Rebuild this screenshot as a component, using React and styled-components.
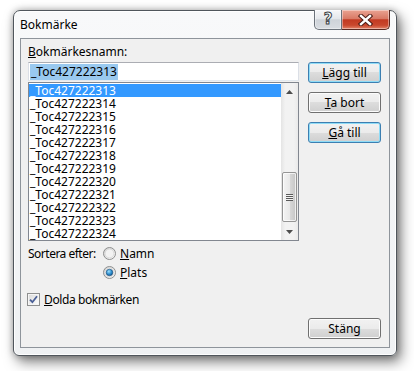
import React from 'react'
import styled, { createGlobalStyle, css } from 'styled-components'

const GlobalStyle = createGlobalStyle`
  html, body {
    margin: 0;
    padding: 0;
    background: #ffffff;
  }
  body {
    font-family: "Noto Sans", "Open Sans", sans-serif;
    font-size: 12px;
    color: #000;
  }
`

const bookmarks = [
  '313', '314', '315', '316', '317', '318',
  '319', '320', '321', '322', '323', '324',
].map(n => `_Toc427222${n}`)

const Radio = ({ checked }) => (
  <svg width="13" height="13" viewBox="0 0 13 13">
    <defs>
      <linearGradient id="radioRing" x1="0" y1="0" x2="1" y2="1">
        <stop offset="0" stopColor="#cfcfcf" />
        <stop offset="1" stopColor="#fcfcfc" />
      </linearGradient>
      <radialGradient id="radioDot" cx="0.4" cy="0.35" r="0.75">
        <stop offset="0" stopColor="#9be0ff" />
        <stop offset="0.55" stopColor="#2b8bcb" />
        <stop offset="1" stopColor="#0d4a80" />
      </radialGradient>
    </defs>
    <circle cx="6.5" cy="6.5" r="6" fill="url(#radioRing)" stroke="#8e8f8f" />
    <circle cx="6.5" cy="6.5" r="4.4" fill="#f2f2f2" stroke="#d6d6d6" strokeWidth="0.8" />
    {checked && <circle cx="6.5" cy="6.5" r="3.3" fill="url(#radioDot)" stroke="#1b4d79" strokeWidth="0.6" />}
  </svg>
)

const Checkbox = () => (
  <svg width="13" height="13" viewBox="0 0 13 13">
    <defs>
      <linearGradient id="boxFill" x1="0" y1="0" x2="1" y2="1">
        <stop offset="0" stopColor="#dcdcdc" />
        <stop offset="1" stopColor="#fbfbfb" />
      </linearGradient>
    </defs>
    <rect x="0.5" y="0.5" width="12" height="12" fill="#f5f5f5" stroke="#8e8f8f" />
    <rect x="2" y="2" width="9" height="9" fill="url(#boxFill)" />
    <path d="M3 6.6 L5.4 9.2 L10 3.2" fill="none" stroke="#4a5f96" strokeWidth="1.8" />
  </svg>
)

const Arrow = ({ down }) => (
  <svg width="7" height="4" viewBox="0 0 7 4">
    <polygon points={down ? '0,0 7,0 3.5,4' : '0,4 7,4 3.5,0'} fill="#4d4d4d" />
  </svg>
)

const CloseGlyph = () => (
  <svg width="15" height="12" viewBox="0 0 15 12">
    <path d="M3 2 L12 10 M12 2 L3 10" stroke="#4a1b14" strokeWidth="4.4" strokeLinecap="square" />
    <path d="M3 2 L12 10 M12 2 L3 10" stroke="#ffffff" strokeWidth="2.4" strokeLinecap="square" />
  </svg>
)

const App = () => {
  return (
    <Page>
      <GlobalStyle />
      <Window>
        <TitleBar>
          <Title>Bokmärke</Title>
          <CaptionGroup>
            <CaptionButton>
              <HelpGlyph>?</HelpGlyph>
            </CaptionButton>
            <CaptionButton $close>
              <CloseGlyph />
            </CaptionButton>
          </CaptionGroup>
        </TitleBar>

        <Client>
          <FieldLabel><u>B</u>okmärkesnamn:</FieldLabel>
          <MainRow>
            <LeftColumn>
              <NameInput>
                <Selected>_Toc427222313</Selected>
              </NameInput>
              <ListBox>
                <Rows>
                  {bookmarks.map((b, i) => (
                    <Row key={b} $selected={i === 0}>{b}</Row>
                  ))}
                </Rows>
                <ScrollBar>
                  <ScrollArrow><Arrow /></ScrollArrow>
                  <Track>
                    <Thumb><Grip /></Thumb>
                  </Track>
                  <ScrollArrow><Arrow down /></ScrollArrow>
                </ScrollBar>
              </ListBox>
            </LeftColumn>
            <ButtonColumn>
              <Button $default><u>L</u>ägg till</Button>
              <Button><u>T</u>a bort</Button>
              <Button $default><u>G</u>å till</Button>
            </ButtonColumn>
          </MainRow>

          <SortRow>
            <SortLabel>Sortera efter:</SortLabel>
            <RadioList>
              <OptionRow><Radio /><span><u>N</u>amn</span></OptionRow>
              <OptionRow><Radio checked /><span><u>P</u>lats</span></OptionRow>
            </RadioList>
          </SortRow>

          <CheckRow>
            <Checkbox />
            <CheckText><u>D</u>olda bokmärken</CheckText>
          </CheckRow>

          <Footer>
            <Button>Stäng</Button>
          </Footer>
        </Client>
      </Window>
    </Page>
  )
}

export default App

const Page = styled.div`
  box-sizing: border-box;
  width: 414px;
  height: 371px;
  padding: 10px 0 0 13px;
  overflow: hidden;
`
const Window = styled.div`
  box-sizing: border-box;
  width: 384px;
  height: 346px;
  border: 1px solid #50565c;
  border-radius: 7px 7px 6px 6px;
  background: linear-gradient(#f8f9fa, #eff1f3);
  box-shadow: inset 0 0 0 1px rgba(255, 255, 255, 0.9),
    0 0 7px rgba(0, 0, 0, 0.28),
    4px 6px 13px rgba(0, 0, 0, 0.5);
  display: flex;
  flex-direction: column;
`
const TitleBar = styled.div`
  height: 27px;
  flex: none;
  display: flex;
  align-items: center;
  padding-left: 6px;
`
const Title = styled.div`
  line-height: 16px;
  margin-top: 1px;
`
const CaptionGroup = styled.div`
  margin-left: auto;
  margin-right: 6px;
  margin-top: -1px;
  align-self: flex-start;
  display: flex;
  height: 20px;
`
const CaptionButton = styled.div`
  box-sizing: border-box;
  height: 20px;
  width: ${p => (p.$close ? 48 : 28)}px;
  border: 1px solid ${p => (p.$close ? '#5a2a22' : '#6b727a')};
  border-top: none;
  display: flex;
  align-items: center;
  justify-content: center;
  box-shadow: inset 0 0 0 1px rgba(255, 255, 255, 0.4);
  ${p =>
    p.$close
      ? css`
          border-left: none;
          border-radius: 0 0 5px 0;
          background: linear-gradient(#eaa392 0%, #d97a66 45%, #c23a22 52%, #c9472d 80%, #e3846a 100%);
        `
      : css`
          border-radius: 0 0 0 5px;
          background: linear-gradient(#f6f7f9 0%, #e4e7eb 45%, #ced3d9 52%, #d8dce1 100%);
        `}
`
const HelpGlyph = styled.span`
  font-family: "DejaVu Sans", sans-serif;
  font-size: 15px;
  font-weight: bold;
  line-height: 15px;
  color: #fff;
  -webkit-text-stroke: 1px #3a3f45;
`
const Client = styled.div`
  flex: 1;
  margin: 0 6px 7px 6px;
  border: 1px solid #8e949b;
  background: #f0f0f0;
  padding: 5px 8px 8px 7px;
  display: flex;
  flex-direction: column;
`
const FieldLabel = styled.div`
  line-height: 16px;
  margin-bottom: 2px;
`
const MainRow = styled.div`
  display: flex;
  gap: 9px;
`
const LeftColumn = styled.div`
  width: 271px;
  display: flex;
  flex-direction: column;
  gap: 1px;
`
const NameInput = styled.div`
  box-sizing: border-box;
  height: 19px;
  border: 1px solid #abadb3;
  border-left-color: #dbdfe6;
  border-right-color: #dbdfe6;
  border-bottom-color: #e3e9ef;
  background: #fff;
  padding: 1px 0 0 1px;
  display: flex;
`
const Selected = styled.span`
  background: #99c9ef;
  line-height: 15px;
  padding: 0 1px;
`
const ListBox = styled.div`
  box-sizing: border-box;
  height: 159px;
  border: 1px solid #828790;
  background: #fff;
  display: flex;
`
const Rows = styled.div`
  flex: 1;
  padding-top: 1px;
`
const Row = styled.div`
  height: 13px;
  line-height: 13px;
  padding-left: 1px;
  white-space: nowrap;
  ${p =>
    p.$selected &&
    css`
      background: #3399ff;
      color: #fff;
    `}
`
const ScrollBar = styled.div`
  width: 17px;
  display: flex;
  flex-direction: column;
  background: linear-gradient(to right, #e4e4e4 0%, #f2f2f2 25%, #f2f2f2 75%, #eaeaea 100%);
`
const ScrollArrow = styled.div`
  height: 17px;
  display: flex;
  align-items: center;
  justify-content: center;
`
const Track = styled.div`
  flex: 1;
  display: flex;
  flex-direction: column;
  padding: 0 1px 1px;
`
const Thumb = styled.div`
  box-sizing: border-box;
  margin-top: auto;
  height: 50px;
  border: 1px solid #959595;
  border-radius: 2px;
  background: linear-gradient(to right, #f4f4f4 0%, #e9e9e9 50%, #d8d8d8 51%, #c6c6c6 100%);
  box-shadow: inset 0 0 0 1px rgba(255, 255, 255, 0.7);
  display: flex;
  align-items: center;
  justify-content: center;
`
const Grip = styled.div`
  width: 7px;
  height: 7px;
  background: repeating-linear-gradient(to bottom, #5a5a5a 0 1px, #f2f2f2 1px 2px);
`
const ButtonColumn = styled.div`
  width: 73px;
  display: flex;
  flex-direction: column;
  gap: 9px;
`
const Button = styled.button`
  box-sizing: border-box;
  width: 73px;
  height: 21px;
  padding: 0;
  border: 1px solid ${p => (p.$default ? '#3c7fb1' : '#707070')};
  border-radius: 3px;
  background: linear-gradient(#f2f2f2 0%, #ebebeb 50%, #dddddd 50%, #cfcfcf 100%);
  box-shadow: inset 0 0 0 1px ${p => (p.$default ? '#8fdcf7' : '#fcfcfc')};
  font-family: inherit;
  font-size: 12px;
  line-height: 17px;
  color: #000;
`
const SortRow = styled.div`
  display: flex;
  margin-top: 3px;
`
const SortLabel = styled.div`
  width: 75px;
  line-height: 19px;
  white-space: nowrap;
  letter-spacing: -0.5px;
`
const RadioList = styled.div`
  display: flex;
  flex-direction: column;
`
const OptionRow = styled.div`
  height: 19px;
  display: flex;
  align-items: center;
  gap: 4px;
  line-height: 16px;
`
const CheckRow = styled(OptionRow)`
  margin-top: 8px;
  margin-left: -1px;
`
const CheckText = styled.span`
  letter-spacing: -0.4px;
`
const Footer = styled.div`
  margin-top: auto;
  display: flex;
  justify-content: flex-end;
`
